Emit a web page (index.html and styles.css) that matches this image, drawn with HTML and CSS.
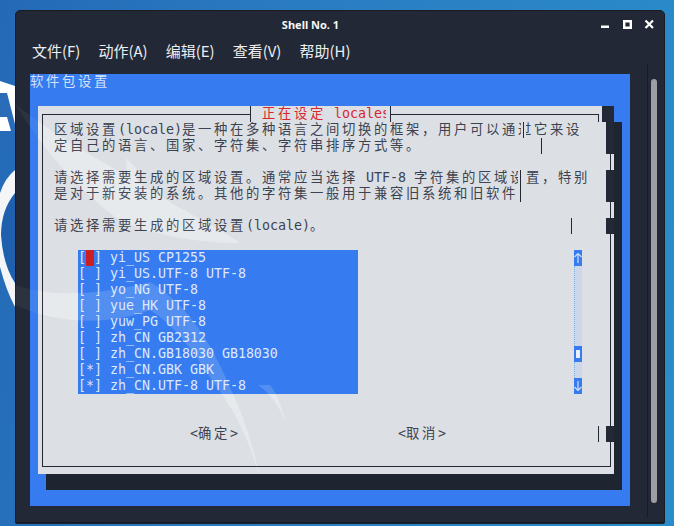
FILE: index.html
```html
<!DOCTYPE html>
<html lang="zh-CN">
<head>
<meta charset="utf-8">
<title>Shell No. 1</title>
<link rel="stylesheet" href="styles.css">
</head>
<body>
<div class="desktop">
  <svg class="wall" width="15" height="526" viewBox="0 0 15 526">
    <path fill="#fff" d="M0 81L15 86V131H0Z"/>
    <path fill="#2a6cb8" d="M0 93H7L15 124V131H11L7 117H0Z"/>
    <path fill="#2a6cb8" d="M0 104L4 117H0Z"/>
    <path fill="#1f60ae" d="M15 190V285Q0 265 1 235Q2 210 15 190Z"/>
    <path fill="#f4f5f6" d="M15 170Q5 178 0 193V267Q6 290 15 307V283Q3 265 1 235Q1 210 15 193Z"/>
  </svg>

  <svg class="defs" width="0" height="0">
    <defs>
      <path id="dragon" d="M15 104C60 140 110 165 150 190C180 210 215 225 240 243C200 243 150 235 120 220C90 200 50 160 15 104ZM126 158L136 168L138 186L128 180ZM15 285C60 300 110 292 150 282C190 305 215 350 232 392C245 420 255 450 262 490C255 450 235 410 215 385C190 345 170 322 150 310C110 325 60 325 15 305ZM270 385C278 395 283 410 286 425C282 410 272 395 258 385Z"/>
    </defs>
  </svg>

  <div class="window">
    <div class="titlebar">
      <span class="title">Shell No. 1</span>
      <div class="controls">
        <svg class="ctl" width="10" height="10" viewBox="0 0 10 10"><path fill="#fff" d="M1 6.5H9V9H1Z"/></svg>
        <svg class="ctl" width="10" height="10" viewBox="0 0 10 10"><path fill="none" stroke="#fff" stroke-width="2.4" d="M2.2 2.2H8.8V8.8H2.2Z"/></svg>
        <svg class="ctl" width="10" height="10" viewBox="0 0 10 10"><path fill="none" stroke="#fff" stroke-width="2.2" d="M1.5 1.5L9 9M9 1.5L1.5 9"/></svg>
      </div>
    </div>
    <nav class="menubar">
      <span class="menu">文件(F)</span>
      <span class="menu">动作(A)</span>
      <span class="menu">编辑(E)</span>
      <span class="menu">查看(V)</span>
      <span class="menu">帮助(H)</span>
    </nav>
    <div class="body">
      <div class="terminal">
        <div class="row header">软件包设置</div>
        <div class="dialog">
          <svg class="dialog-art" width="576" height="368" viewBox="38 106 576 368"><use href="#dragon" fill="#fff" opacity="0.3"/></svg>
          <div class="frame">
            <div class="row">区域设置<span class="m">(locale)</span>是一种在多种语言之间切换的框架，用户可以通过它来设</div>
            <div class="row">定自己的语言、国家、字符集、字符串排序方式等。</div>
            <div class="row"></div>
            <div class="row">请选择需要生成的区域设置。通常应当选择<span class="m"> UTF-8 </span>字符集的区域设置，特别</div>
            <div class="row">是对于新安装的系统。其他的字符集一般用于兼容旧系统和旧软件</div>
            <div class="row"></div>
            <div class="row">请选择需要生成的区域设置<span class="m">(locale)</span>。</div>
            <div class="row"></div>
            <div class="listwrap">
              <div class="list">
                <svg class="list-art" width="280" height="144" viewBox="78 250 280 144"><use href="#dragon" fill="#fff" opacity="0.1"/></svg>
                <div class="row m">[<span class="cur"></span>] yi_US CP1255</div>
                <div class="row m">[ ] yi_US.UTF-8 UTF-8</div>
                <div class="row m">[ ] yo_NG UTF-8</div>
                <div class="row m">[ ] yue_HK UTF-8</div>
                <div class="row m">[ ] yuw_PG UTF-8</div>
                <div class="row m">[ ] zh_CN GB2312</div>
                <div class="row m">[ ] zh_CN.GB18030 GB18030</div>
                <div class="row m">[*] zh_CN.GBK GBK</div>
                <div class="row m">[*] zh_CN.UTF-8 UTF-8</div>
              </div>
              <div class="sb">
                <div class="sb-btn"><svg width="8" height="16" viewBox="0 0 8 16"><path fill="none" stroke="#cfe0fb" stroke-width="1.2" d="M4 13V4M0.5 7L4 3.5L7.5 7"/></svg></div>
                <div class="sb-track"></div>
                <div class="sb-btn"><span class="sb-thumb"></span></div>
                <div class="sb-track short"></div>
                <div class="sb-btn"><svg width="8" height="16" viewBox="0 0 8 16"><path fill="none" stroke="#cfe0fb" stroke-width="1.2" d="M4 3V12M0.5 9L4 12.5L7.5 9"/></svg></div>
              </div>
            </div>
            <div class="buttons">
              <span class="row btn"><span class="m">&lt;</span>确定<span class="m">&gt;</span></span>
              <span class="row btn"><span class="m">&lt;</span>取消<span class="m">&gt;</span></span>
            </div>
          </div>

          <div class="rule rule-l"></div>
          <div class="rule rule-r"></div>
          <div class="legend"><span class="legend-text">正在设定<span class="m"> locales</span></span></div>

          <div class="patch p-top"></div>
          <div class="patch p-a"></div>
          <div class="patch p-b"></div>
          <div class="patch p-c"></div>
          <div class="patch p-d"></div>

          <div class="mask m-a"></div>
          <div class="mask m-b"></div>
          <div class="vl v-corner"></div>
          <div class="vl v-a"></div>
          <div class="vl v-b"></div>
          <div class="vl v-c"></div>
          <div class="vl v-d"></div>
          <div class="vl v-e"></div>
        </div>
      </div>
      <div class="lane"><div class="thumb"></div></div>
    </div>
  </div>

  <svg class="swoosh" width="650" height="460" viewBox="15 60 650 460"><use href="#dragon" fill="#fff" opacity="0.05"/></svg>
</div>
</body>
</html>
```
FILE: styles.css
```css
* { box-sizing: border-box; }
html, body { margin: 0; padding: 0; }
body { width: 674px; height: 526px; overflow: hidden; }

.desktop {
  position: relative;
  width: 674px;
  height: 526px;
  overflow: hidden;
  background: linear-gradient(100deg, #2469b6 0%, #2a7cc2 40%, #2a8dca 100%);
}
.wall { position: absolute; left: 0; top: 0; }
.defs { position: absolute; }

.window {
  position: absolute;
  left: 15px;
  top: 10px;
  width: 650px;
  height: 513px;
  display: flex;
  flex-direction: column;
  background: #222835;
  border: 1px solid #171b24;
  border-radius: 5px 5px 2px 2px;
  box-shadow: 0 1px 0 #1b2330;
  color: #fff;
}

.titlebar {
  position: relative;
  height: 27px;
  flex: none;
  display: flex;
  align-items: center;
  justify-content: center;
}
.title {
  font: 700 11px/1 "Noto Sans", sans-serif;
  color: #f4f5f7;
  margin-left: -59px;
  margin-top: -1px;
}
.controls {
  position: absolute;
  right: 10px;
  top: 8px;
  display: flex;
  gap: 12px;
}
.ctl { display: block; }

.menubar {
  height: 26px;
  flex: none;
  display: flex;
  padding-left: 16px;
  gap: 18px;
  align-items: center;
}
.menu {
  font: 400 15px/26px "Noto Sans CJK SC", "Noto Sans", sans-serif;
  color: #eceef1;
}

.body {
  flex: 1;
  display: flex;
  padding-left: 14px;
  min-height: 0;
}

.terminal {
  width: 600px;
  height: 432px;
  margin-top: 10px;
  flex: none;
  background: #367bf0;
}

.row {
  height: 16px;
  font: 400 13.33px/14px "Noto Sans CJK SC", sans-serif;
  letter-spacing: 2.67px;
  white-space: pre;
  color: #3c4350;
}
.m {
  font-family: "DejaVu Sans Mono", monospace;
  font-size: 13.33px;
  letter-spacing: -0.03px;
}
.header {
  color: #d5e1f8;
  margin-bottom: 16px;
}

.dialog {
  position: relative;
  margin-left: 8px;
  width: 576px;
  height: 368px;
  padding: 8px 3px 7px 4px;
  background: #dce0e5;
  box-shadow: 8px 16px 0 #1f2530;
}
.dialog-art { position: absolute; left: 0; top: 0; }
.frame {
  position: relative;
  height: 353px;
  border: solid #222835;
  border-width: 0 1px 1px 1px;
  padding: 8px 0 0 11px;
}

.listwrap {
  display: flex;
  margin-left: 24px;
  gap: 216px;
  margin-bottom: 32px;
}
.list {
  position: relative;
  width: 280px;
  background: #367bf0;
}
.list-art { position: absolute; left: 0; top: 0; }
.list .row {
  position: relative;
  line-height: 16px;
  color: #dde8fb;
}
.cur {
  display: inline-block;
  width: 8px;
  height: 16px;
  vertical-align: top;
  background: #cc1f24;
}

.sb { width: 8px; }
.sb-btn {
  position: relative;
  height: 16px;
  background: #367bf0;
  display: flex;
  align-items: center;
  justify-content: center;
}
.sb-track {
  height: 80px;
  background: #cdd7ea;
  border-left: 1px dotted #86b4e2;
}
.sb-track.short { height: 16px; }
.sb-thumb { width: 4px; height: 8px; background: #e8eefc; }

.buttons {
  display: flex;
  padding-left: 136px;
  gap: 160px;
}
.btn { width: 48px; letter-spacing: 2.67px; }

.rule {
  position: absolute;
  top: 8px;
  height: 1px;
  background: #222835;
}
.rule-l { left: 4px; width: 208px; }
.rule-r { left: 352px; width: 209px; }

.legend {
  position: absolute;
  left: 212px;
  top: 0;
  width: 141px;
  height: 16px;
  padding-left: 11px;
  background: #dce0e5;
  border: solid #222835;
  border-width: 0 1px;
}
.legend-text {
  display: block;
  width: 124px;
  height: 16px;
  overflow: hidden;
  font: 400 13.33px/14px "Noto Sans CJK SC", sans-serif;
  letter-spacing: 2.67px;
  white-space: pre;
  color: #d9262c;
}

.patch { position: absolute; background: #222835; }
.p-top { left: 564px; top: 0; width: 12px; height: 16px; }
.p-a { left: 568px; top: 16px; width: 8px; height: 32px; }
.p-b { left: 568px; top: 64px; width: 8px; height: 32px; }
.p-c { left: 568px; top: 112px; width: 8px; height: 16px; }
.p-d { left: 568px; top: 320px; width: 8px; height: 16px; }

.mask { position: absolute; background: #dce0e5; height: 16px; }
.m-a { left: 483px; top: 16px; width: 5px; }
.m-b { left: 480px; top: 64px; width: 8px; }

.vl { position: absolute; width: 1px; background: #222835; }
.v-corner { left: 560px; top: 8px; height: 8px; }
.v-a { left: 485px; top: 16px; height: 16px; }
.v-b { left: 503px; top: 32px; height: 16px; }
.v-c { left: 482px; top: 64px; height: 32px; }
.v-d { left: 533px; top: 112px; height: 16px; }
.v-e { left: 560px; top: 320px; height: 16px; }

.lane {
  margin-left: 17px;
  width: 18px;
  height: 454px;
  border-left: 1px solid #181c26;
  padding: 15px 0 0 3px;
}
.thumb {
  width: 6px;
  height: 424px;
  border-radius: 3px;
  background: #9c9ea3;
}

.swoosh {
  position: absolute;
  left: 15px;
  top: 60px;
  pointer-events: none;
}
```
